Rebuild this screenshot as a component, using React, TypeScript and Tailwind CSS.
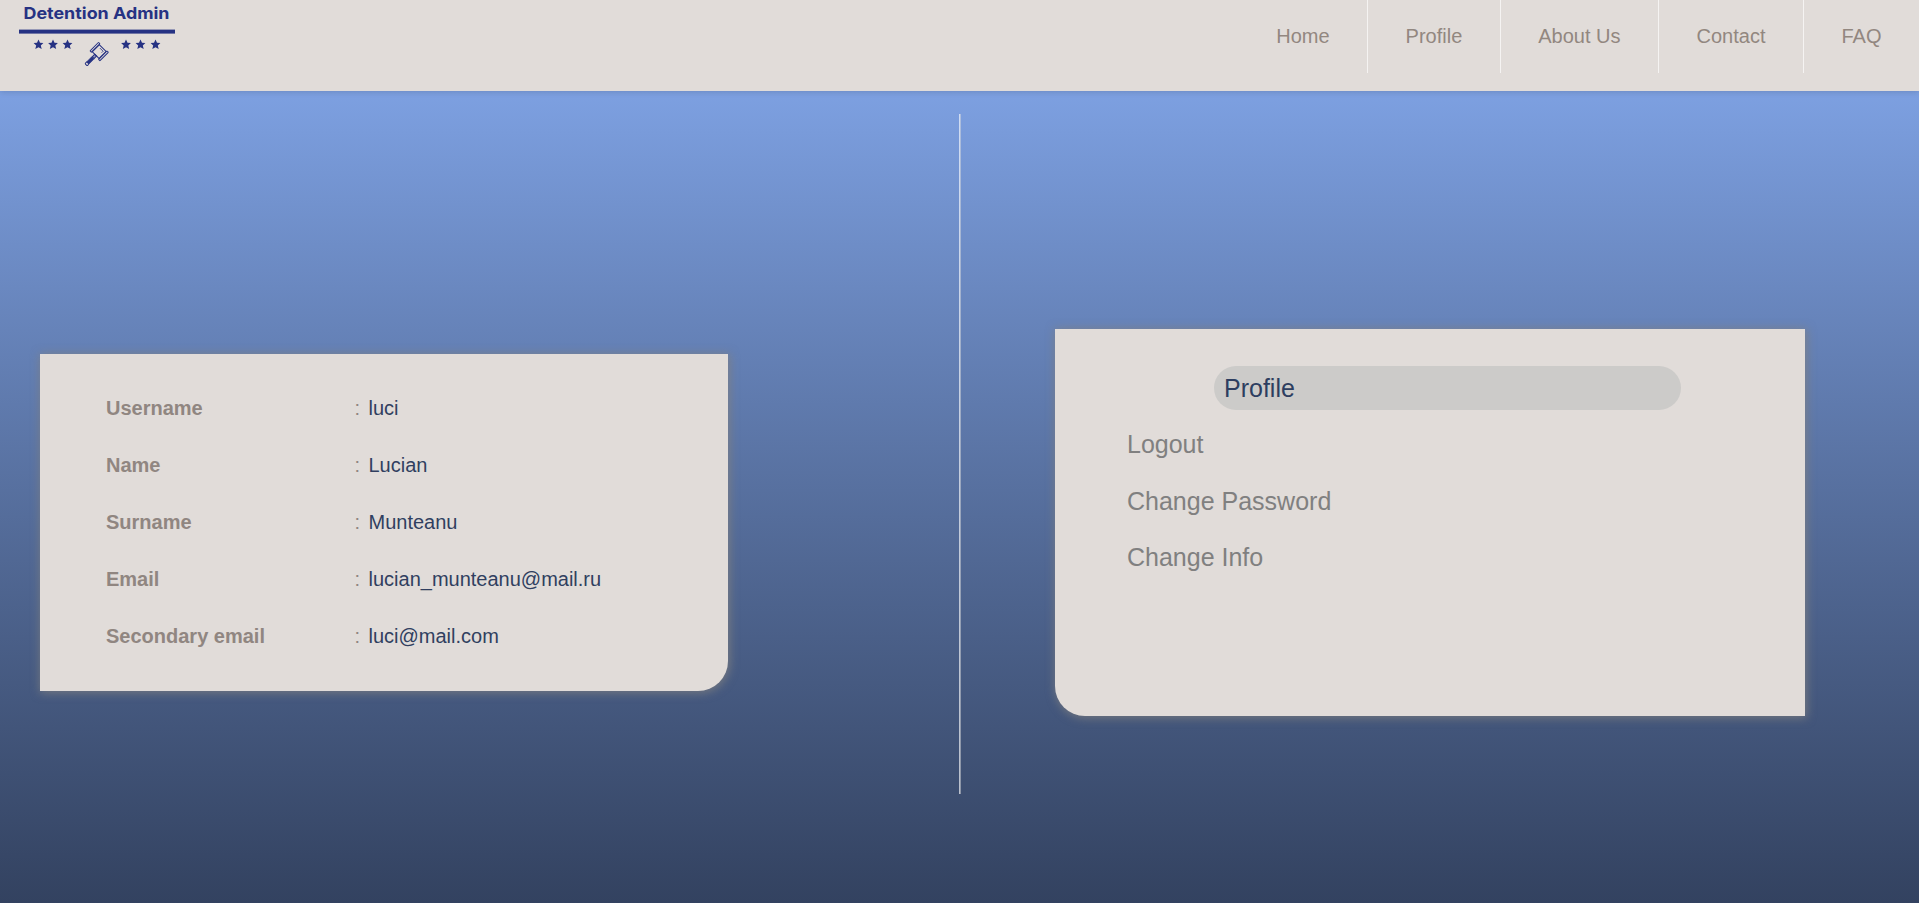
const NAV = ["Home", "Profile", "About Us", "Contact", "FAQ"];

const FIELDS = [
  { label: "Username", value: "luci" },
  { label: "Name", value: "Lucian" },
  { label: "Surname", value: "Munteanu" },
  { label: "Email", value: "lucian_munteanu@mail.ru" },
  { label: "Secondary email", value: "luci@mail.com" },
];

const ACTIONS = ["Logout", "Change Password", "Change Info"];

const STARS = [38.5, 53, 67.5, 126, 140.5, 155.5];

function Logo() {
  return (
    <svg className="block h-[91px] w-[200px]" viewBox="0 0 200 91" fill="#263283">
      <text x="23.5" y="18.8" fontFamily="Inter, sans-serif" fontSize="16.5" fontWeight="650" textLength="146" lengthAdjust="spacingAndGlyphs">
        Detention Admin
      </text>
      <rect x="19" y="29.6" width="156" height="4" />
      {STARS.map((x) => (
        <path
          key={x}
          transform={`translate(${x} 44.6)`}
          d="M0-5.1 1.5-1.8 4.9-1.5 2.3.9 3.2 4.4 0 2.6-3.2 4.4-2.3.9-4.9-1.5-1.5-1.8Z"
        />
      ))}
      <g transform="translate(99.2 51.6) rotate(45)" fill="none" stroke="#263283" strokeWidth="1">
        <rect x="-4.8" y="-5" width="9.6" height="10" />
        <rect x="-7" y="-6" width="2" height="12" rx=".5" />
        <rect x="5" y="-6" width="2" height="12" rx=".5" />
        <path d="M-2-3H2.5M2.5-3V-1" strokeWidth=".8" />
        <rect x="-1.3" y="5" width="2.6" height="3.5" fill="#263283" fillOpacity=".4" />
        <rect x="-1.6" y="9" width="3.2" height="7" fill="#263283" strokeWidth=".6" />
        <rect x="-1.6" y="16" width="3.2" height="2.6" rx="1" />
      </g>
    </svg>
  );
}

export default function App() {
  return (
    <div className="flex h-[903px] w-full flex-col overflow-hidden font-['Liberation_Sans',Arial,sans-serif]">
      <header className="relative flex h-[91px] shrink-0 items-start justify-between bg-[#e1dcd9] shadow-[0_1px_6px_rgba(0,0,0,0.15)]">
        <Logo />
        <nav className="flex h-[73px] text-xl text-[#928780]">
          {NAV.map((item) => (
            <a key={item} className="flex items-center border-r border-[#f5f3f2] px-[37.5px] pb-[2px] last:border-r-0">
              {item}
            </a>
          ))}
        </nav>
      </header>

      <main className="flex flex-1 items-start bg-linear-to-b from-[#7da0e1] to-[#334260]">
        <section className="mt-[263px] ml-10 flex h-[337px] w-[688px] flex-col rounded-br-[30px] bg-[#e1dcd9] pt-[25px] pl-[66px] text-xl shadow-[1px_1px_10px_1px_rgba(128,128,128,0.8)]">
          {FIELDS.map(({ label, value }) => (
            <div key={label} className="flex h-[57px] items-center">
              <span className="w-[248.5px] font-bold text-[#908681]">{label}</span>
              <span className="w-[14px] text-[#908681]">:</span>
              <span className="text-[#303f60]">{value}</span>
            </div>
          ))}
        </section>

        <div className="mt-[23px] ml-[231px] h-[680px] w-[2px] border-r border-[#dddddd]/50 bg-white/65 bg-clip-padding" />

        <section className="mt-[238px] ml-[94px] h-[387px] w-[750px] rounded-bl-[30px] bg-[#e1dcd9] pt-[37px] text-[25px] text-[#808080] shadow-[1px_1px_10px_1px_rgba(128,128,128,0.8)]">
          <div className="ml-[159px] flex h-11 w-[467px] items-center rounded-full bg-[#cccbc9] pt-[2px] pl-[10px] text-[#2d3e60]">
            Profile
          </div>
          <ul className="mt-[6.6px] ml-[72px]">
            {ACTIONS.map((action) => (
              <li key={action} className="flex h-[56.5px] items-center">
                {action}
              </li>
            ))}
          </ul>
        </section>
      </main>
    </div>
  );
}
